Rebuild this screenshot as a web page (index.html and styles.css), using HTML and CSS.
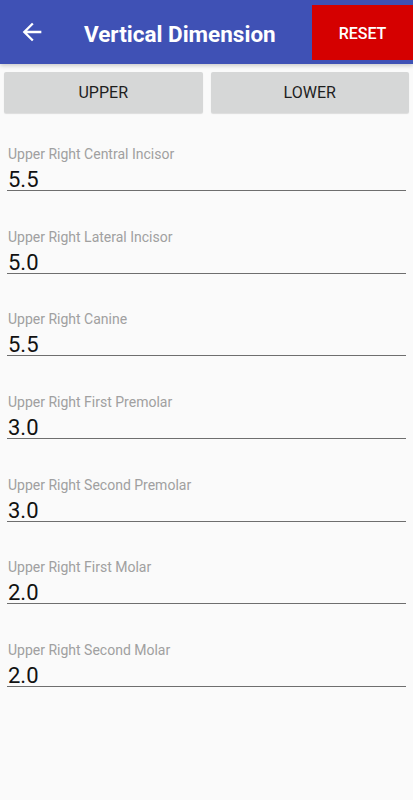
FILE: index.html
```html
<!DOCTYPE html>
<html>
<head>
<meta charset="utf-8">
<link rel="stylesheet" href="styles.css">
</head>
<body>
<header class="appbar">
  <svg class="back" viewBox="0 0 24 24" width="28" height="28"><path fill="#fff" d="M20 11H7.83l5.59-5.59L12 4l-8 8 8 8 1.41-1.41L7.83 13H20v-2z"/></svg>
  <div class="title">Vertical Dimension</div>
  <div class="reset">RESET</div>
</header>
<div class="tabs">
  <div class="btn">UPPER</div>
  <div class="btn">LOWER</div>
</div>
<div class="fields">
  <div class="field"><div class="label">Upper Right Central Incisor</div><div class="value">5.5</div></div>
  <div class="field"><div class="label">Upper Right Lateral Incisor</div><div class="value">5.0</div></div>
  <div class="field"><div class="label">Upper Right Canine</div><div class="value">5.5</div></div>
  <div class="field"><div class="label">Upper Right First Premolar</div><div class="value">3.0</div></div>
  <div class="field"><div class="label">Upper Right Second Premolar</div><div class="value">3.0</div></div>
  <div class="field"><div class="label">Upper Right First Molar</div><div class="value">2.0</div></div>
  <div class="field"><div class="label">Upper Right Second Molar</div><div class="value">2.0</div></div>
</div>
</body>
</html>
```
FILE: styles.css
```css
html, body {
  margin: 0;
  padding: 0;
}
body {
  background: #fafafa;
  font-family: Roboto, "Liberation Sans", sans-serif;
  width: 413px;
  height: 800px;
  overflow: hidden;
}
.appbar {
  height: 64px;
  background: #3f51b5;
  display: flex;
  align-items: center;
  box-shadow: 0 2px 4px rgba(0,0,0,0.18);
  position: relative;
}
.back {
  margin-left: 18px;
  display: block;
  flex: none;
}
.title {
  margin-left: 38px;
  color: #fff;
  font-weight: 700;
  font-size: 22.5px;
  line-height: 28px;
  padding-top: 4px;
}
.reset {
  margin-left: auto;
  align-self: flex-start;
  margin-top: 5px;
  width: 101px;
  height: 55px;
  background: #d50000;
  color: #fff;
  font-weight: 500;
  font-size: 16px;
  display: flex;
  align-items: center;
  justify-content: center;
  padding-top: 1px;
  box-sizing: border-box;
}
.tabs {
  display: flex;
  gap: 8px;
  padding: 8px 4px 0;
}
.btn {
  flex: 1;
  height: 41px;
  background: #d6d7d7;
  border-radius: 2px;
  box-shadow: 0 1px 1px rgba(0,0,0,0.12);
  display: flex;
  align-items: center;
  justify-content: center;
  color: #1e1e1e;
  font-size: 16px;
}
.fields {
  margin-top: 33px;
}
.field {
  height: 82.667px;
  margin: 0 7px;
}
.label {
  font-size: 14px;
  line-height: 16px;
  color: #a0a0a0;
  padding-left: 1px;
}
.value {
  margin-top: 6px;
  padding-top: 1px;
  font-size: 22px;
  line-height: 21px;
  color: #111;
  padding-left: 1px;
  border-bottom: 1px solid #6e6e6e;
}
```
